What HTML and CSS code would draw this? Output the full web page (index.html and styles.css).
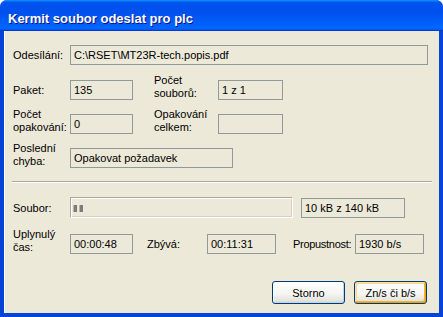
FILE: index.html
```html
<!DOCTYPE html>
<html lang="cs">
  <head>
    <meta charset="utf-8">
    <title>Kermit soubor odeslat pro plc</title>
    <link rel="stylesheet" href="styles.css">
  </head>
  <body>
    <div class="window">
      <div class="titlebar">Kermit soubor odeslat pro plc</div>
      <div class="client">
        <div class="row row-path">
          <span class="label single">Odesílání:</span>
          <span class="field w-path">C:\RSET\MT23R-tech.popis.pdf</span>
        </div>
        <div class="row row-packet">
          <span class="label single">Paket:</span>
          <span class="field w-small">135</span>
          <span class="label label-mid">Počet<br>souborů:</span>
          <span class="field w-count">1 z 1</span>
        </div>
        <div class="row row-retry">
          <span class="label">Počet<br>opakování:</span>
          <span class="field w-small">0</span>
          <span class="label label-mid">Opakování<br>celkem:</span>
          <span class="field w-count"></span>
        </div>
        <div class="row row-error">
          <span class="label">Poslední<br>chyba:</span>
          <span class="field w-error">Opakovat požadavek</span>
        </div>

        <div class="separator"></div>

        <div class="row row-file">
          <span class="label single">Soubor:</span>
          <span class="progress"><i class="chunk"></i><i class="chunk"></i></span>
          <span class="field w-size">10 kB z 140 kB</span>
        </div>
        <div class="row row-time">
          <span class="label">Uplynulý<br>čas:</span>
          <span class="field w-small">00:00:48</span>
          <span class="label single label-left">Zbývá:</span>
          <span class="field w-time">00:11:31</span>
          <span class="label single label-rate">Propustnost:</span>
          <span class="field w-time">1930 b/s</span>
        </div>

        <div class="buttons">
          <button class="btn">Storno</button>
          <button class="btn btn-default">Zn/s či b/s</button>
        </div>
      </div>
    </div>
  </body>
</html>
```

FILE: styles.css
```css
* {
  box-sizing: border-box
}

body {
  margin: 0;
  padding: 0;
  background: #fff;
  font-family: 'Liberation Sans', Arial, sans-serif;
  font-size: 11px;
  color: #000
}

.window {
  width: 443px;
  height: 317px;
  display: flex;
  flex-direction: column;
  border-radius: 7px 7px 0 0;
  background: #0843d8;
  padding: 0 4px 4px 4px;
  overflow: hidden
}

.titlebar {
  height: 31px;
  flex: none;
  margin: 0 -4px;
  padding: 11px 0 0 8px;
  color: #fff;
  font-size: 13px;
  font-weight: bold;
  text-shadow: 1px 1px #0f1089;
  background: linear-gradient(to bottom, #0997ff 0%, #0053ee 8%, #0050ee 40%, #0066ff 88%, #0066ff 93%, #005bff 95%, #003dd7 96%, #003dd7 100%)
}

.client {
  flex: 1;
  background: #ece9d8;
  padding: 14px 0 0 9px;
  box-shadow: inset 1px 0 #fff
}

.row {
  display: flex;
  align-items: flex-end
}

.label {
  width: 57px;
  line-height: 13px;
  flex: none
}

.label.single {
  line-height: 20px
}

.label-mid {
  width: 64px;
  margin-left: 21px
}

.field {
  height: 20px;
  border: 1px solid #8f9a9c;
  padding: 3px 0 0 3px;
  white-space: nowrap;
  flex: none
}

.w-path { width: 358px }
.w-small { width: 63px }
.w-count { width: 65px }
.w-error { width: 163px }
.w-size { width: 104px; margin-left: 8px }
.w-time { width: 69px }

.row-packet { margin-top: 9px }
.row-retry { margin-top: 8px }
.row-error { margin-top: 8px }

.separator {
  width: 420px;
  margin: 13px 0 0 -1px;
  border-top: 1px solid #aca899;
  border-bottom: 1px solid #fff
}

.row-file { margin-top: 14px }
.row-time { margin-top: 10px }

.progress {
  width: 223px;
  height: 21px;
  border: 1px solid #aca899;
  border-right-color: #fff;
  border-bottom-color: #fff;
  box-shadow: inset 1px 1px #fff, inset -1px -1px #d4d0c8;
  padding: 7px 0 0 2px;
  display: flex;
  gap: 2px;
  flex: none
}

.chunk {
  width: 4px;
  height: 7px;
  background: #7c7c7c;
  box-shadow: inset 1px 0 #b5b5b5
}

.label-left {
  width: 60px;
  margin-left: 14px
}

.label-rate {
  width: 62px;
  margin-left: 17px;
  letter-spacing: -0.3px
}

.buttons {
  display: flex;
  justify-content: flex-end;
  gap: 9px;
  margin: 27px 12px 0 0
}

.btn {
  width: 73px;
  height: 23px;
  font-family: 'Liberation Sans', Arial, sans-serif;
  font-size: 11px;
  color: #000;
  border: 1px solid #003c74;
  border-radius: 3px;
  background: linear-gradient(to bottom, #fff 0%, #f4f4f0 60%, #e3e2da 90%, #d6d0c5 100%);
  box-shadow: inset -1px -1px #c2d3ec, inset 1px 1px #fff;
  padding: 0
}

.btn-default {
  box-shadow: inset -1px -1px #e5a01a, inset 1px 1px #ffe3a8, inset -2px -2px #f8b330, inset 2px 2px #fdd889
}
```
